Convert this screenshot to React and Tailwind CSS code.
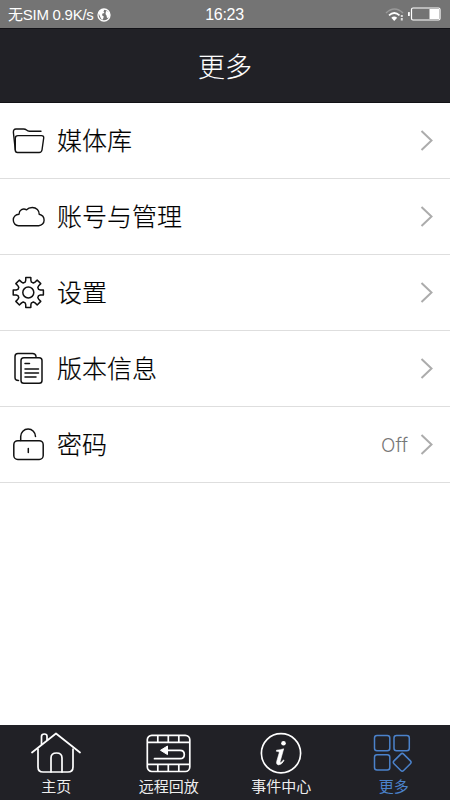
const FolderIcon = () => (
  <svg className="h-[33px] w-[34px]" viewBox="0 0 34 33" fill="none" stroke="#111" strokeWidth="1.4" strokeLinecap="round" strokeLinejoin="round">
    <path d="M4.300 26 2.400 8.500Q2.200 5 5 5h7.500q1.800 0 3 1.100t3 1.200H30" />
    <path d="M7 11.600h23.500q2.500 0 2.200 2.400l-1.700 12q-.4 2.500-2.900 2.500H6.500q-2.200 0-2.200-2.500V14.200q0-2.600 2.700-2.600Z" />
  </svg>
);

const CloudIcon = () => (
  <svg className="h-[33px] w-[34px]" viewBox="0 0 34 33" fill="none" stroke="#111" strokeWidth="1.4" strokeLinejoin="round">
    <path d="M7.500 25.700C4.400 25.700 2.300 23 2.300 20c0-3.200 2.300-5.600 5.700-5.800.1-4.300 4-6.400 7.600-4.400C17 8.100 19 7.500 21.200 7.500c4.200 0 7.300 3 7 6.800 3 .7 4.900 2.900 4.900 5.900 0 3.100-2.400 5.500-5.400 5.500Z" />
  </svg>
);

// [radius, degrees from the tooth's centre line]
const toothProfile = [
  [10.8, -17],
  [12.4, -12],
  [15.300, -9.5],
  [15.300, 9.5],
  [12.4, 12],
  [10.8, 17],
];

const gearPoints = Array.from({ length: 8 }, (_, tooth) =>
  toothProfile.map(([r, deg]) => {
    const angle = ((tooth * 45 + deg) * Math.PI) / 180;
    return `${(17.3 + r * Math.sin(angle)).toFixed(2)},${(16.5 - r * Math.cos(angle)).toFixed(2)}`;
  })
).flat().join(" ");

const GearIcon = () => (
  <svg className="h-[33px] w-[34px]" viewBox="0 0 34 33" fill="none" stroke="#111" strokeWidth="1.500" strokeLinejoin="round">
    <polygon points={gearPoints} />
    <circle cx="17.300" cy="16.500" r="5.500" />
  </svg>
);

const DocsIcon = () => (
  <svg className="h-[33px] w-[34px]" viewBox="0 0 34 33" fill="none" stroke="#111" strokeWidth="1.500" strokeLinecap="round" strokeLinejoin="round">
    <path d="M7.500 28.500q-3.500 0-3.500-3V4.500Q4 1.500 7 1.500h14.500q3.200 0 3.500 3" />
    <rect x="10" y="5.800" width="21" height="25.500" rx="2.800" />
    <path d="M14 11.500h4.500M14 17h13.500M14 21h13.500M14 25h11" />
  </svg>
);

const LockIcon = () => (
  <svg className="h-[33px] w-[34px]" viewBox="0 0 34 33" fill="none" stroke="#111" strokeWidth="1.500" strokeLinecap="round">
    <rect x="2.800" y="12.700" width="29.400" height="18.800" rx="4" />
    <path d="M9.700 12.500V8.500a7.400 7.400 0 0 1 14.800 0M17.300 20.500v4" />
  </svg>
);

const Chevron = () => (
  <svg className="h-[21px] w-[13px]" viewBox="0 0 13 21" fill="none" stroke="#acacac" strokeWidth="2">
    <path d="M1.500 1 11.500 10.500 1.500 20" />
  </svg>
);

const HomeIcon = () => (
  <svg className="h-[42px] w-[50px]" viewBox="0 0 50 42" fill="none" stroke="#fff" strokeWidth="1.700" strokeLinecap="round" strokeLinejoin="round">
    <path d="M1 20.500 25 1.500l24 19" />
    <path d="M7 17v18q0 5 5 5h25q5 0 5-5V17" />
    <path d="M10.500 12V4.500q0-2.500 2.800-2.500T16 4.500V8" />
    <path d="M20 40V26q0-5 5.500-5t5.500 5v14" />
  </svg>
);

const PlaybackIcon = () => (
  <svg className="h-[42px] w-[50px]" viewBox="0 0 50 42" fill="none" stroke="#fff" strokeWidth="1.700" strokeLinejoin="round">
    <rect x="3.300" y="3.300" width="42.500" height="36.200" rx="4.500" />
    <path d="M3.300 10.300h42.500M3.300 32.300h42.500M13.800 3.300v7M24.300 3.300v7M34.800 3.300v7M13.800 32.300v7M24.300 32.300v7M34.800 32.300v7" />
    <path d="M22 18.300h14q4.300 0 4.300 4.200t-4.300 4.200H10.500" strokeLinecap="round" />
    <path d="m16.500 18.300 7-4.300v8.600Z" fill="#fff" strokeWidth="1" />
  </svg>
);

const InfoIcon = () => (
  <svg className="h-[42px] w-[50px]" viewBox="0 0 50 42" fill="none" stroke="#fff" strokeWidth="1.700">
    <circle cx="25" cy="21.300" r="19.600" />
    <circle cx="27.500" cy="11.300" r="2.300" fill="#fff" stroke="none" />
    <path d="M20.500 18.200q4-.3 7.200-1.400l-3.500 12.400q-.3 1.400.4 1.400 1 0 2.800-2.700l.7.500q-2.500 4.500-5.400 4.500-2.800 0-2-3.400l2.300-8q.6-2-.7-2.100l-1.900-.1Z" fill="#fff" strokeWidth=".6" />
  </svg>
);

const MoreIcon = () => (
  <svg className="h-[42px] w-[50px]" viewBox="0 0 50 42" fill="none" stroke="#4b82cb" strokeWidth="1.500" strokeLinejoin="round">
    <rect x="5.500" y="3.500" width="15.300" height="15.300" rx="2.500" />
    <rect x="25" y="3.500" width="15.300" height="15.300" rx="2.500" />
    <rect x="5.500" y="22.700" width="15.300" height="15.300" rx="2.500" />
    <rect x="26.400" y="23.500" width="13.600" height="13.600" rx="2" transform="rotate(45 33.200 30.300)" />
  </svg>
);

const rows = [
  { label: "媒体库", Icon: FolderIcon },
  { label: "账号与管理", Icon: CloudIcon },
  { label: "设置", Icon: GearIcon },
  { label: "版本信息", Icon: DocsIcon },
  { label: "密码", Icon: LockIcon, value: "Off" },
];

const tabs = [
  { label: "主页", Icon: HomeIcon },
  { label: "远程回放", Icon: PlaybackIcon },
  { label: "事件中心", Icon: InfoIcon },
  { label: "更多", Icon: MoreIcon, active: true },
];

const StatusBar = () => (
  <div className="grid h-7 grid-cols-[1fr_auto_1fr] items-center bg-[#747474] pl-2 pr-[9px] font-['Liberation_Sans','Noto_Sans_CJK_SC',sans-serif] text-white">
    <div className="flex items-center gap-[3px] whitespace-nowrap pt-px text-[15px] leading-none tracking-[-0.25px]">
      <span>无SIM 0.9K/s</span>
      <svg className="h-[14px] w-[14px]" viewBox="0 0 14 14">
        <circle cx="7" cy="7" r="6" fill="none" stroke="#fff" strokeWidth="1.300" />
        <path d="M1.500 5 4 1.800 7.500 1.300 6.500 3.500 7.500 5 5.500 5.500 5 7.200 6.800 8.500 6 11 5 12 3.500 9.500ZM9 3l2.500.5L13 7l-1 2.500-2 .5L9.500 7.500 8.500 6Z" fill="#fff" />
      </svg>
    </div>
    <span className="pt-[2px] text-[16px] leading-none tracking-[-0.3px]">16:23</span>
    <div className="flex items-center justify-end gap-[4px]">
      <svg className="h-[15px] w-[19px]" viewBox="0 0 19 15" fill="none" strokeWidth="1.500">
        <path d="M1 6q8.500-8 17 0" stroke="#999" />
        <path d="M4 8.300q5.300-4.600 10.500 0" stroke="#fff" strokeWidth="1.700" />
        <path d="M6.300 10.700q2.900-2.500 5.900 0L9.200 14Z" fill="#fff" />
        <path d="M16.800 8v2M16.800 11v2.500" stroke="#ddd" strokeWidth="2" />
      </svg>
      <svg className="h-[14px] w-[33px]" viewBox="0 0 33 14">
        <rect x="0" y="5" width="1.800" height="4" rx=".5" fill="#fff" />
        <rect x="3.500" y="1" width="28.500" height="12" rx="1.500" fill="none" stroke="#fff" strokeWidth="1.200" />
        <rect x="21.500" y="2" width="9.500" height="10" fill="#fff" />
      </svg>
    </div>
  </div>
);

const App = () => (
  <div className="flex h-[800px] w-[450px] flex-col overflow-hidden bg-white font-['Roboto','Noto_Sans_CJK_SC',sans-serif]">
    <StatusBar />
    <header className="flex h-[75px] items-center justify-center border-y border-[#111116] bg-[#212126] pt-1.5 text-[27px] font-light text-white [-webkit-text-stroke:0.1px]">
      更多
    </header>

    <main className="flex-1">
      {rows.map(({ label, Icon, value }) => (
        <div key={label} className="flex h-19 items-center border-b border-[#dedede] pl-[11px] pr-[17px]">
          <Icon />
          <span className="ml-3 flex-1 pt-px text-[25px] font-light leading-none text-black [-webkit-text-stroke:0.2px]">
            {label}
          </span>
          {value && (
            <span className="mr-3 pt-px font-['Inter','Liberation_Sans',sans-serif] text-[19px] font-light leading-none text-[#777]">
              {value}
            </span>
          )}
          <Chevron />
        </div>
      ))}
    </main>

    <nav className="grid h-[75px] grid-cols-4 bg-[#212126]">
      {tabs.map(({ label, Icon, active }) => (
        <div key={label} className="flex flex-col items-center pt-[7px]">
          <Icon />
          <span className={`mt-[6px] text-[15px] leading-none ${active ? "text-[#4b82cb]" : "text-[#eee]"}`}>
            {label}
          </span>
        </div>
      ))}
    </nav>
  </div>
);

export default App;
